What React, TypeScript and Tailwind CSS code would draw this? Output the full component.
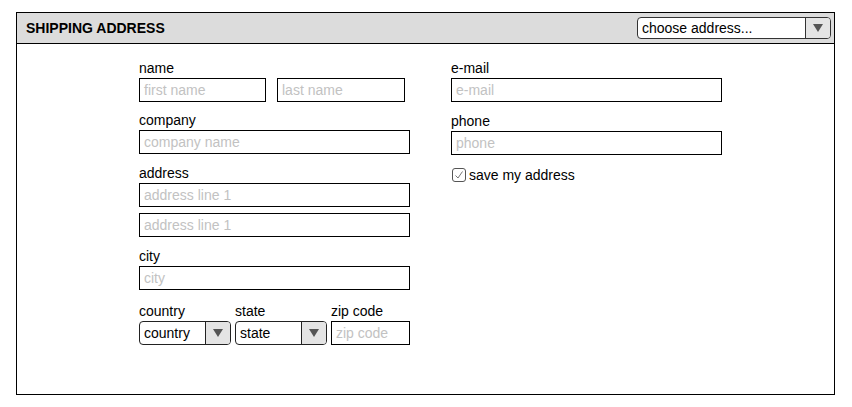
import React from "react";

const font = { fontFamily: '"Liberation Sans", Arial, sans-serif' };

function Label({ children }: { children: React.ReactNode }) {
  return <div className="text-[14px] leading-[16px] text-black">{children}</div>;
}

function Input({ placeholder, className = "" }: { placeholder: string; className?: string }) {
  return (
    <div
      className={`h-[24px] border border-black bg-white flex items-center px-[4px] text-[14px] text-[#c2c2c2] ${className}`}
    >
      {placeholder}
    </div>
  );
}

function Arrow() {
  return (
    <svg width="10" height="8" viewBox="0 0 10 8">
      <path d="M0 0 L10 0 L5 8 Z" fill="#555" />
    </svg>
  );
}

function Select({ text, className = "" }: { text: string; className?: string }) {
  return (
    <div
      className={`h-[24px] border border-[#222] rounded-[4px] bg-white flex items-stretch overflow-hidden text-[14px] text-black ${className}`}
    >
      <div className="flex-1 flex items-center px-[4px]">{text}</div>
      <div className="w-[25px] border-l border-[#222] bg-[#e4e4e4] flex items-center justify-center">
        <Arrow />
      </div>
    </div>
  );
}

export default function App() {
  return (
    <div className="w-[852px] h-[407px] bg-white pt-[12px] pl-[16px]" style={font}>
      <div className="w-[819px] h-[383px] border border-black flex flex-col">
        <div className="h-[31px] bg-[#dcdcdc] border-b border-black flex items-center justify-between pl-[9px] pr-[3px]">
          <div className="font-bold text-[14px] text-black">SHIPPING ADDRESS</div>
          <div className="h-[22px] w-[194px] border border-[#333] rounded-[4px] bg-white flex items-stretch overflow-hidden text-[14px] text-black">
            <div className="flex-1 flex items-center px-[4px]">choose address...</div>
            <div className="w-[25px] border-l border-[#333] bg-[#e4e4e4] flex items-center justify-center">
              <Arrow />
            </div>
          </div>
        </div>
        <div className="flex pl-[122px] pt-[16px] gap-[41px]">
          <div className="w-[271px] flex flex-col">
            <Label>name</Label>
            <div className="mt-[2px] flex gap-[11px]">
              <Input placeholder="first name" className="w-[127px]" />
              <Input placeholder="last name" className="w-[128px]" />
            </div>
            <div className="mt-[10px]">
              <Label>company</Label>
            </div>
            <Input placeholder="company name" className="mt-[2px] w-[271px]" />
            <div className="mt-[11px]">
              <Label>address</Label>
            </div>
            <Input placeholder="address line 1" className="mt-[2px] w-[271px]" />
            <Input placeholder="address line 1" className="mt-[6px] w-[271px]" />
            <div className="mt-[11px]">
              <Label>city</Label>
            </div>
            <Input placeholder="city" className="mt-[2px] w-[271px]" />
            <div className="mt-[13px] flex gap-[4px]">
              <div className="flex flex-col">
                <Label>country</Label>
                <Select text="country" className="mt-[2px] w-[92px]" />
              </div>
              <div className="flex flex-col">
                <Label>state</Label>
                <Select text="state" className="mt-[2px] w-[92px]" />
              </div>
              <div className="flex flex-col">
                <Label>zip code</Label>
                <Input placeholder="zip code" className="mt-[2px] w-[79px]" />
              </div>
            </div>
          </div>
          <div className="w-[271px] flex flex-col">
            <Label>e-mail</Label>
            <Input placeholder="e-mail" className="mt-[2px] w-[271px]" />
            <div className="mt-[11px]">
              <Label>phone</Label>
            </div>
            <Input placeholder="phone" className="mt-[2px] w-[271px]" />
            <div className="mt-[12px] flex items-center gap-[3px] pl-[1px]">
              <div className="w-[14px] h-[14px] border border-[#555] rounded-[3px] flex items-center justify-center bg-white">
                <svg width="10" height="10" viewBox="0 0 10 10">
                  <path d="M1.5 5.5 L4 8 L8.5 1.5" fill="none" stroke="#777" strokeWidth="1" />
                </svg>
              </div>
              <div className="text-[14px] leading-[16px] text-black">save my address</div>
            </div>
          </div>
        </div>
      </div>
    </div>
  );
}
